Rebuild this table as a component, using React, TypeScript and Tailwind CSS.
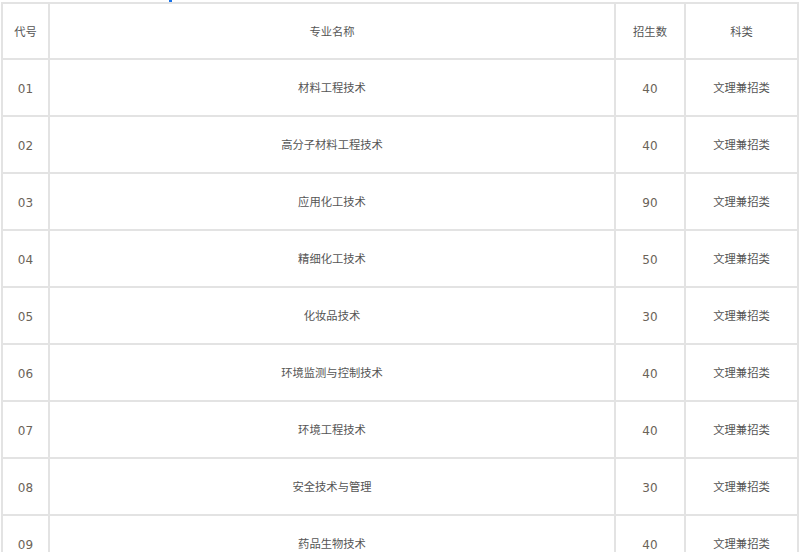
const rows = [
  ["01", "材料工程技术", "40"],
  ["02", "高分子材料工程技术", "40"],
  ["03", "应用化工技术", "90"],
  ["04", "精细化工技术", "50"],
  ["05", "化妆品技术", "30"],
  ["06", "环境监测与控制技术", "40"],
  ["07", "环境工程技术", "40"],
  ["08", "安全技术与管理", "30"],
  ["09", "药品生物技术", "40"],
]

const cell = "border-r-2 border-b-2 border-[#e3e3e3] text-center align-middle p-0 leading-[20px]"
const zh = "text-[11.3px] pt-[3px]"
const num = "text-[#6b6358] pt-[3px]"

export default function App() {
  return (
    <div className="w-[800px] h-[552px] overflow-hidden bg-white text-[12px] text-[#555] font-['DejaVu_Sans','Noto_Sans_CJK_SC',sans-serif]">
      <div className="h-[2px] flex">
        <span className="ml-[169px] w-[3px] h-[2px] bg-[#1a73e8]" />
      </div>
      <table className="ml-[1px] w-[798px] table-fixed border-separate border-spacing-0 border-l-2 border-t-2 border-[#e3e3e3]">
        <colgroup>
          <col className="w-[47px]" />
          <col className="w-[566px]" />
          <col className="w-[70px]" />
          <col className="w-[113px]" />
        </colgroup>
        <thead>
          <tr className="h-[56px]">
            <th className={`${cell} ${zh} font-normal`}>代号</th>
            <th className={`${cell} ${zh} font-normal`}>专业名称</th>
            <th className={`${cell} ${zh} font-normal`}>招生数</th>
            <th className={`${cell} ${zh} font-normal`}>科类</th>
          </tr>
        </thead>
        <tbody>
          {rows.map(([code, name, n]) => (
            <tr key={code} className="h-[57px]">
              <td className={`${cell} ${num}`}>{code}</td>
              <td className={`${cell} ${zh}`}>{name}</td>
              <td className={`${cell} ${num}`}>{n}</td>
              <td className={`${cell} ${zh}`}>文理兼招类</td>
            </tr>
          ))}
        </tbody>
      </table>
    </div>
  )
}
